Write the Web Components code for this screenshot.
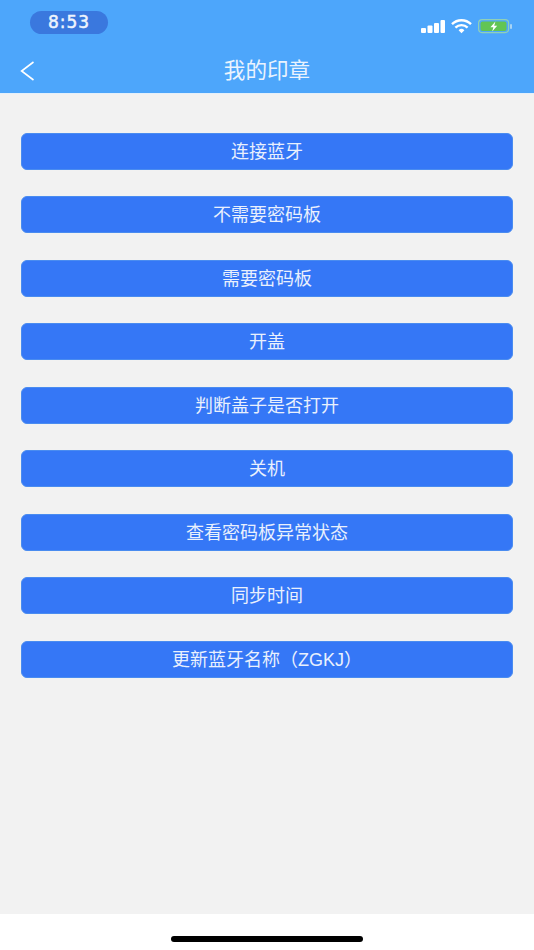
<!DOCTYPE html>
<html>
<head>
<meta charset="utf-8">
<style>
    html, body { margin: 0; height: 100%; }
    body { background: #f2f2f2; font-family: "Liberation Sans", "Noto Sans CJK SC", sans-serif; }
</style>
</head>
<body>
<app-page>
    <app-header title="我的印章"></app-header>
    <button-list>
        <blue-button>连接蓝牙</blue-button>
        <blue-button>不需要密码板</blue-button>
        <blue-button>需要密码板</blue-button>
        <blue-button>开盖</blue-button>
        <blue-button>判断盖子是否打开</blue-button>
        <blue-button>关机</blue-button>
        <blue-button>查看密码板异常状态</blue-button>
        <blue-button>同步时间</blue-button>
        <blue-button>更新蓝牙名称（ZGKJ）</blue-button>
    </button-list>
    <home-bar></home-bar>
</app-page>
<script>
class AppPage extends HTMLElement {
    constructor() {
        super();
        this.attachShadow({mode: 'open'});
        this.shadowRoot.innerHTML = `
            <style>
                :host { display: flex; flex-direction: column; height: 950px; overflow: hidden; background: #f2f2f2; }
            </style>
            <slot></slot>`;
    }
}

class AppHeader extends HTMLElement {
    constructor() {
        super();
        this.attachShadow({mode: 'open'});
        this.shadowRoot.innerHTML = `
            <style>
                :host { display: block; height: 93px; background: #4da6fb; color: #fff; border-bottom: 1px solid #e4f0fb; }
                .status { height: 46px; display: flex; justify-content: space-between; box-sizing: border-box; padding: 11px 22px 0 30px; }
                .time {
                    width: 78px; height: 23px; border-radius: 12px; background: #3a78de;
                    display: flex; align-items: center; justify-content: center;
                    font: 17px/23px "DejaVu Sans", sans-serif; color: #eef4fd; letter-spacing: 1px;
                    -webkit-text-stroke: .5px #eef4fd;
                }
                .icons { display: flex; gap: 6px; align-items: center; height: 30px; }
                .nav { height: 47px; display: flex; align-items: center; justify-content: center; position: relative; }
                .back { position: absolute; left: 20px; top: 15px; }
                .title { font-size: 21.6px; line-height: 47px; margin-top: 2px; color: #eaf3fe; }
                svg { display: block; }
            </style>
            <div class="status">
                <div class="time">8:53</div>
                <div class="icons">
                    <svg width="24" height="13" viewBox="0 0 24 13" fill="#fff">
                        <rect x="0" y="8" width="5" height="5" rx="1"/>
                        <rect x="6.5" y="5.5" width="5" height="7.5" rx="1"/>
                        <rect x="13" y="3" width="5" height="10" rx="1"/>
                        <rect x="19.5" y="0" width="4.5" height="13" rx="1"/>
                    </svg>
                    <svg width="21" height="15" viewBox="0 0 21 15" fill="none" stroke="#fff" stroke-width="2.4">
                        <path d="M1 5.2a13.5 13.5 0 0 1 19 0"/>
                        <path d="M4.4 8.6a8.7 8.7 0 0 1 12.2 0"/>
                        <path d="M10.5 14.2l-2.9-3a4.1 4.1 0 0 1 5.8 0z" fill="#fff" stroke="none"/>
                    </svg>
                    <svg width="34" height="15" viewBox="0 0 34 15">
                        <rect x=".6" y=".6" width="30" height="13" rx="3.5" fill="none" stroke="#8fd0b8" stroke-width="1.2"/>
                        <rect x="2.5" y="2.5" width="26" height="9.5" rx="2" fill="#62c554"/>
                        <rect x="32" y="5" width="2" height="5" rx="1" fill="#a8d4f5"/>
                        <path d="M17.4 2.6l-5 5.6h3l-1.2 4.2 5-5.6h-3z" fill="#fff"/>
                    </svg>
                </div>
            </div>
            <div class="nav">
                <svg class="back" width="15" height="20" viewBox="0 0 15 20" fill="none" stroke="#fff" stroke-width="1.6">
                    <path d="M13.5 1L1.6 10l11.9 9"/>
                </svg>
                <div class="title">${this.getAttribute('title')}</div>
            </div>`;
    }
}

class ButtonList extends HTMLElement {
    constructor() {
        super();
        this.attachShadow({mode: 'open'});
        this.shadowRoot.innerHTML = `
            <style>
                :host { display: flex; flex: 1; flex-direction: column; gap: 26.5px; padding: 38.8px 21px 0 21px; }
            </style>
            <slot></slot>`;
    }
}

class BlueButton extends HTMLElement {
    constructor() {
        super();
        this.attachShadow({mode: 'open'});
        this.shadowRoot.innerHTML = `
            <style>
                :host {
                    display: flex; align-items: center; justify-content: center;
                    height: 37px; box-sizing: border-box; padding-bottom: 3px;
                    background: #3577f6; border: 1px solid #4a8cf0; border-radius: 6px;
                    color: #e9f0fd; font-size: 18px;
                }
            </style>
            <slot></slot>`;
    }
}

class HomeBar extends HTMLElement {
    constructor() {
        super();
        this.attachShadow({mode: 'open'});
        this.shadowRoot.innerHTML = `
            <style>
                :host { display: flex; justify-content: center; height: 36px; box-sizing: border-box; padding-top: 22px; background: #fff; }
                .bar { width: 192px; height: 6px; border-radius: 3px; background: #000; }
            </style>
            <div class="bar"></div>`;
    }
}

customElements.define('app-page', AppPage);
customElements.define('app-header', AppHeader);
customElements.define('button-list', ButtonList);
customElements.define('blue-button', BlueButton);
customElements.define('home-bar', HomeBar);
</script>
</body>
</html>
